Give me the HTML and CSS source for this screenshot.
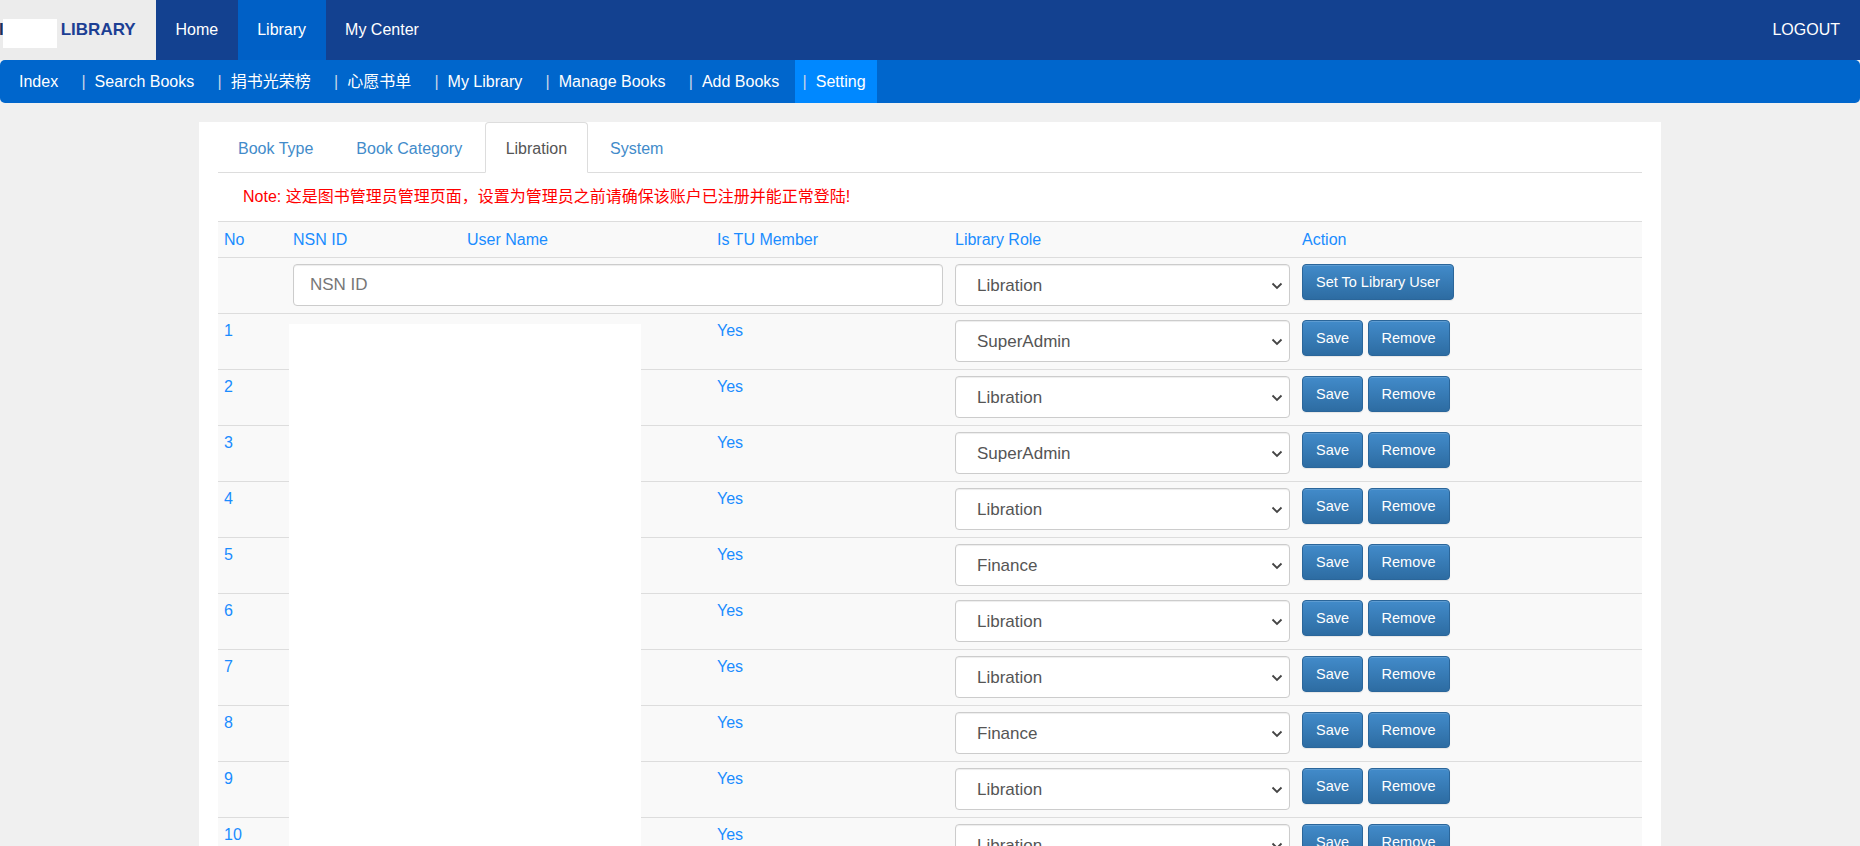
FILE: index.html
```html
<!DOCTYPE html>
<html>
<head>
<meta charset="utf-8">
<title>Library Setting</title>
<link rel="stylesheet" href="styles.css">
</head>
<body>
<header class="topbar">
  <div class="brand"><span class="brand-cut">I</span><span class="brand-mask"></span><span class="brand-name">LIBRARY</span></div>
  <nav class="mainnav">
    <a class="mainnav-item" href="#">Home</a>
    <a class="mainnav-item is-active" href="#">Library</a>
    <a class="mainnav-item" href="#">My Center</a>
  </nav>
  <a class="logout" href="#">LOGOUT</a>
</header>
<nav class="subnav">
  <a class="subnav-item" href="#">Index</a>
  <a class="subnav-item" href="#"><span class="pipe">|</span>Search Books</a>
  <a class="subnav-item" href="#"><span class="pipe">|</span>捐书光荣榜</a>
  <a class="subnav-item" href="#"><span class="pipe">|</span>心愿书单</a>
  <a class="subnav-item" href="#"><span class="pipe">|</span>My Library</a>
  <a class="subnav-item" href="#"><span class="pipe">|</span>Manage Books</a>
  <a class="subnav-item" href="#"><span class="pipe">|</span>Add Books</a>
  <a class="subnav-item is-active" href="#"><span class="pipe">|</span>Setting</a>
</nav>
<main class="panel">
  <ul class="tabs">
    <li><a class="tab" href="#">Book Type</a></li>
    <li><a class="tab" href="#">Book Category</a></li>
    <li><a class="tab is-active" href="#">Libration</a></li>
    <li><a class="tab" href="#">System</a></li>
  </ul>
  <p class="note">Note: 这是图书管理员管理页面，设置为管理员之前请确保该账户已注册并能正常登陆!</p>
  <div class="table-wrap">
    <table class="grid">
      <colgroup>
        <col class="c-no"><col class="c-nsn"><col class="c-user"><col class="c-tu"><col class="c-role"><col>
      </colgroup>
      <thead>
        <tr><th>No</th><th>NSN ID</th><th>User Name</th><th>Is TU Member</th><th>Library Role</th><th>Action</th></tr>
      </thead>
      <tbody>
        <tr>
          <td></td>
          <td colspan="3"><input class="field" type="text" placeholder="NSN ID"></td>
          <td><div class="select-wrap"><select class="field select"><option>Libration</option></select><svg class="chev" width="12" height="8" viewBox="0 0 12 8"><path d="M1.5 1.5 L6 6 L10.5 1.5" fill="none" stroke="#444" stroke-width="1.8"/></svg></div></td>
          <td><button class="btn">Set To Library User</button></td>
        </tr>
        <tr><td>1</td><td></td><td></td><td>Yes</td><td><div class="select-wrap"><select class="field select"><option>SuperAdmin</option></select><svg class="chev" width="12" height="8" viewBox="0 0 12 8"><path d="M1.5 1.5 L6 6 L10.5 1.5" fill="none" stroke="#444" stroke-width="1.8"/></svg></div></td><td><button class="btn">Save</button> <button class="btn">Remove</button></td></tr>
        <tr><td>2</td><td></td><td></td><td>Yes</td><td><div class="select-wrap"><select class="field select"><option>Libration</option></select><svg class="chev" width="12" height="8" viewBox="0 0 12 8"><path d="M1.5 1.5 L6 6 L10.5 1.5" fill="none" stroke="#444" stroke-width="1.8"/></svg></div></td><td><button class="btn">Save</button> <button class="btn">Remove</button></td></tr>
        <tr><td>3</td><td></td><td></td><td>Yes</td><td><div class="select-wrap"><select class="field select"><option>SuperAdmin</option></select><svg class="chev" width="12" height="8" viewBox="0 0 12 8"><path d="M1.5 1.5 L6 6 L10.5 1.5" fill="none" stroke="#444" stroke-width="1.8"/></svg></div></td><td><button class="btn">Save</button> <button class="btn">Remove</button></td></tr>
        <tr><td>4</td><td></td><td></td><td>Yes</td><td><div class="select-wrap"><select class="field select"><option>Libration</option></select><svg class="chev" width="12" height="8" viewBox="0 0 12 8"><path d="M1.5 1.5 L6 6 L10.5 1.5" fill="none" stroke="#444" stroke-width="1.8"/></svg></div></td><td><button class="btn">Save</button> <button class="btn">Remove</button></td></tr>
        <tr><td>5</td><td></td><td></td><td>Yes</td><td><div class="select-wrap"><select class="field select"><option>Finance</option></select><svg class="chev" width="12" height="8" viewBox="0 0 12 8"><path d="M1.5 1.5 L6 6 L10.5 1.5" fill="none" stroke="#444" stroke-width="1.8"/></svg></div></td><td><button class="btn">Save</button> <button class="btn">Remove</button></td></tr>
        <tr><td>6</td><td></td><td></td><td>Yes</td><td><div class="select-wrap"><select class="field select"><option>Libration</option></select><svg class="chev" width="12" height="8" viewBox="0 0 12 8"><path d="M1.5 1.5 L6 6 L10.5 1.5" fill="none" stroke="#444" stroke-width="1.8"/></svg></div></td><td><button class="btn">Save</button> <button class="btn">Remove</button></td></tr>
        <tr><td>7</td><td></td><td></td><td>Yes</td><td><div class="select-wrap"><select class="field select"><option>Libration</option></select><svg class="chev" width="12" height="8" viewBox="0 0 12 8"><path d="M1.5 1.5 L6 6 L10.5 1.5" fill="none" stroke="#444" stroke-width="1.8"/></svg></div></td><td><button class="btn">Save</button> <button class="btn">Remove</button></td></tr>
        <tr><td>8</td><td></td><td></td><td>Yes</td><td><div class="select-wrap"><select class="field select"><option>Finance</option></select><svg class="chev" width="12" height="8" viewBox="0 0 12 8"><path d="M1.5 1.5 L6 6 L10.5 1.5" fill="none" stroke="#444" stroke-width="1.8"/></svg></div></td><td><button class="btn">Save</button> <button class="btn">Remove</button></td></tr>
        <tr><td>9</td><td></td><td></td><td>Yes</td><td><div class="select-wrap"><select class="field select"><option>Libration</option></select><svg class="chev" width="12" height="8" viewBox="0 0 12 8"><path d="M1.5 1.5 L6 6 L10.5 1.5" fill="none" stroke="#444" stroke-width="1.8"/></svg></div></td><td><button class="btn">Save</button> <button class="btn">Remove</button></td></tr>
        <tr><td>10</td><td></td><td></td><td>Yes</td><td><div class="select-wrap"><select class="field select"><option>Libration</option></select><svg class="chev" width="12" height="8" viewBox="0 0 12 8"><path d="M1.5 1.5 L6 6 L10.5 1.5" fill="none" stroke="#444" stroke-width="1.8"/></svg></div></td><td><button class="btn">Save</button> <button class="btn">Remove</button></td></tr>
      </tbody>
    </table>
    <div class="mask"></div>
  </div>
</main>
</body>
</html>
```

FILE: styles.css
```css
html, body {
  margin: 0;
  padding: 0;
}
body {
  background: #f0f0f0;
  font-family: "Liberation Sans", Arial, "Noto Sans CJK SC", sans-serif;
  font-size: 16px;
  color: #333;
}
a { text-decoration: none; }

.topbar {
  display: flex;
  align-items: stretch;
  height: 60px;
  background: #134190;
}
.brand {
  width: 156px;
  background: #ececec;
  display: flex;
  align-items: center;
}
.brand-cut {
  font-weight: bold;
  font-size: 17px;
  color: #1b2f5c;
  margin-left: -1px;
}
.brand-mask {
  display: inline-block;
  width: 54px;
  height: 29px;
  background: #fff;
  margin-left: -1px;
  margin-top: 6px;
}
.brand-name {
  font-weight: bold;
  font-size: 17px;
  color: #1c3f94;
  margin-left: 4px;
}
.mainnav {
  display: flex;
}
.mainnav-item {
  display: block;
  padding: 0 19.5px;
  line-height: 60px;
  color: #fff;
}
.mainnav-item.is-active {
  background: #0060c6;
}
.logout {
  margin-left: auto;
  padding-right: 20px;
  line-height: 60px;
  color: #fff;
}

.subnav {
  display: flex;
  height: 43px;
  background: #0066cc;
  border-radius: 5px;
  padding-left: 11px;
}
.subnav-item {
  display: block;
  padding: 1px 11px 0 8px;
  margin-right: 4.3px;
  line-height: 42px;
  color: #fff;
}
.subnav-item.is-active {
  background: #0088ff;
}
.pipe {
  color: #c9d6e8;
  margin-right: 9px;
}

.panel {
  width: 1424px;
  margin: 19px auto 0;
  padding: 0 19px 40px;
  background: #fff;
}
.tabs {
  list-style: none;
  margin: 0;
  padding: 0;
  display: flex;
  border-bottom: 1px solid #ddd;
}
.tabs li {
  margin-bottom: -1px;
  margin-right: 2.5px;
}
.tab {
  display: block;
  padding: 16px 19.5px 13px 19px;
  line-height: 20px;
  border: 1px solid transparent;
  border-radius: 4px 4px 0 0;
  color: #428bca;
}
.tab.is-active {
  color: #555;
  background: #fff;
  border-color: #ddd #ddd transparent;
  padding-left: 19.5px;
}

.note {
  margin: 0;
  padding: 12px 0 12px 25px;
  line-height: 24px;
  font-size: 16px;
  color: #ff0000;
}

.table-wrap {
  position: relative;
}
.grid {
  width: 100%;
  border-collapse: collapse;
  table-layout: fixed;
}
.c-no { width: 69px; }
.c-nsn { width: 174px; }
.c-user { width: 250px; }
.c-tu { width: 238px; }
.c-role { width: 347px; }
.grid th {
  text-align: left;
  font-weight: normal;
  color: #1a8cff;
  padding: 7px 6px 6px;
  line-height: 22px;
  border-top: 1px solid #ddd;
  background: #f9f9f9;
}
.grid td {
  padding: 6px 6px 7px;
  line-height: 22px;
  border-top: 1px solid #ddd;
  background: #f9f9f9;
  color: #1a8cff;
  vertical-align: top;
}
.field {
  display: block;
  width: 100%;
  height: 42px;
  box-sizing: border-box;
  border: 1px solid #ccc;
  border-radius: 4px;
  padding: 0 16px;
  font-family: "Liberation Sans", Arial, sans-serif;
  font-size: 17px;
  color: #555;
  background: #fff;
  box-shadow: inset 0 1px 1px rgba(0,0,0,0.075);
}
.field::placeholder { color: #777; }
.select-wrap {
  position: relative;
}
.select {
  appearance: none;
  -webkit-appearance: none;
  padding-left: 21px;
}
.chev {
  position: absolute;
  right: 7px;
  top: 18px;
}
.btn {
  display: inline-block;
  font-family: "Liberation Sans", Arial, sans-serif;
  font-size: 14.5px;
  line-height: 20px;
  padding: 7px 13px;
  border: 1px solid #2b669a;
  border-radius: 4px;
  color: #fff;
  background: linear-gradient(to bottom, #428bca 0%, #2d6ca2 100%);
  box-shadow: inset 0 1px 0 rgba(255,255,255,0.15), 0 1px 1px rgba(0,0,0,0.075);
  cursor: pointer;
}
.mask {
  position: absolute;
  left: 71px;
  top: 103px;
  width: 352px;
  bottom: -40px;
  background: #fff;
}
```
